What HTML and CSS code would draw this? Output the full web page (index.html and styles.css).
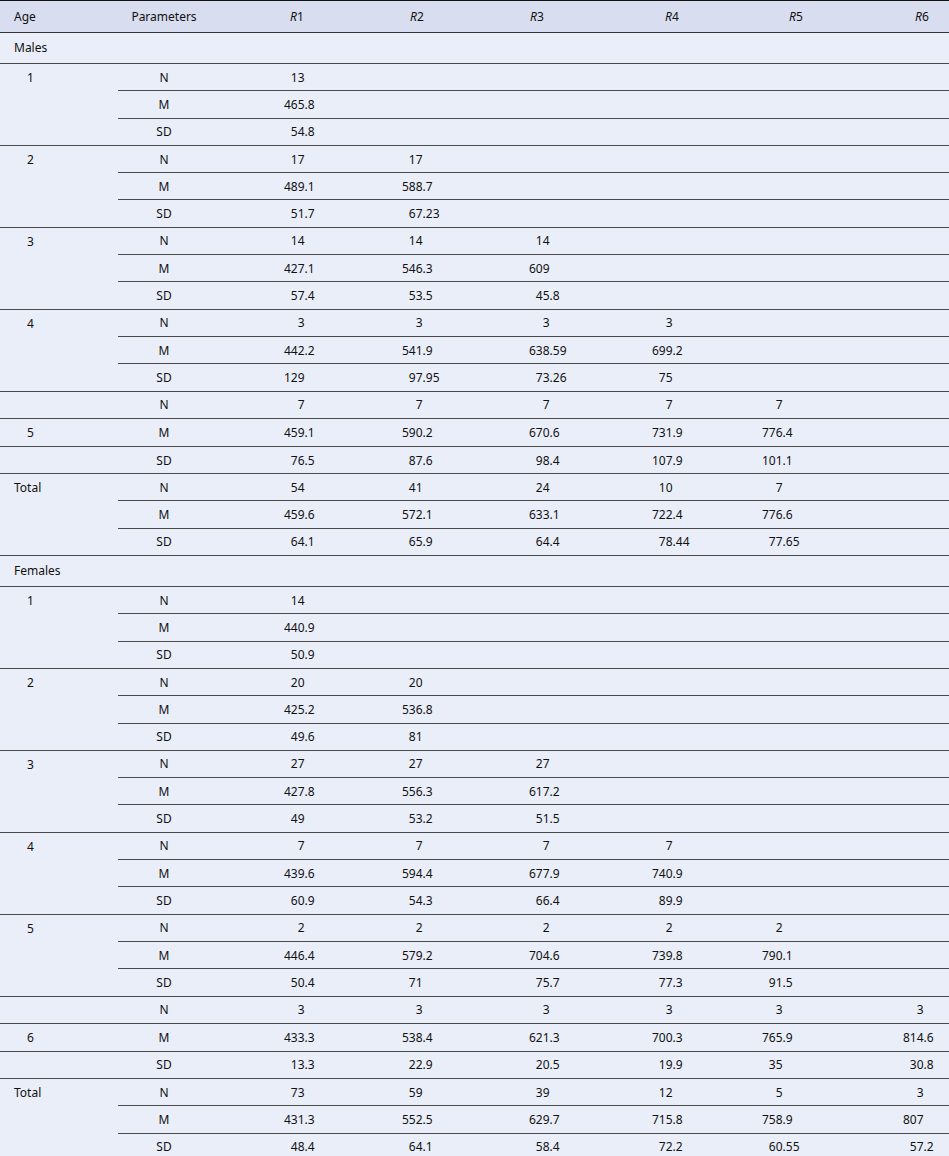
FILE: index.html
```html
<!DOCTYPE html>
<html lang="en">
<head>
<meta charset="utf-8">
<title>Table</title>
<link rel="stylesheet" href="styles.css">
</head>
<body>
<table class="data">
<colgroup>
<col class="w-age"><col class="w-par"><col class="w-r1"><col class="w-r2"><col class="w-r3"><col class="w-r4"><col class="w-r5"><col class="w-r6">
</colgroup>
<thead>
<tr>
<th class="age">Age</th><th class="par">Parameters</th>
<th class="h h1"><i>R</i>1</th><th class="h h2"><i>R</i>2</th><th class="h h3"><i>R</i>3</th><th class="h h4"><i>R</i>4</th><th class="h h5"><i>R</i>5</th><th class="h h6"><i>R</i>6</th>
</tr>
</thead>
<tbody>
<tr class="sec"><td class="age">Males</td><td></td><td></td><td></td><td></td><td></td><td></td><td></td></tr>

<tr><td class="age num" rowspan="3">1</td><td class="par">N</td><td class="v"><span class="i">13</span></td><td></td><td></td><td></td><td></td><td></td></tr>
<tr class="sub"><td class="par">M</td><td class="v"><span class="i">465</span>.8</td><td></td><td></td><td></td><td></td><td></td></tr>
<tr class="sub"><td class="par">SD</td><td class="v"><span class="i">54</span>.8</td><td></td><td></td><td></td><td></td><td></td></tr>

<tr><td class="age num" rowspan="3">2</td><td class="par">N</td><td class="v"><span class="i">17</span></td><td class="v"><span class="i">17</span></td><td></td><td></td><td></td><td></td></tr>
<tr class="sub"><td class="par">M</td><td class="v"><span class="i">489</span>.1</td><td class="v"><span class="i">588</span>.7</td><td></td><td></td><td></td><td></td></tr>
<tr class="sub"><td class="par">SD</td><td class="v"><span class="i">51</span>.7</td><td class="v"><span class="i">67</span>.23</td><td></td><td></td><td></td><td></td></tr>

<tr><td class="age num" rowspan="3">3</td><td class="par">N</td><td class="v"><span class="i">14</span></td><td class="v"><span class="i">14</span></td><td class="v"><span class="i">14</span></td><td></td><td></td><td></td></tr>
<tr class="sub"><td class="par">M</td><td class="v"><span class="i">427</span>.1</td><td class="v"><span class="i">546</span>.3</td><td class="v"><span class="i">609</span></td><td></td><td></td><td></td></tr>
<tr class="sub"><td class="par">SD</td><td class="v"><span class="i">57</span>.4</td><td class="v"><span class="i">53</span>.5</td><td class="v"><span class="i">45</span>.8</td><td></td><td></td><td></td></tr>

<tr><td class="age num" rowspan="3">4</td><td class="par">N</td><td class="v"><span class="i">3</span></td><td class="v"><span class="i">3</span></td><td class="v"><span class="i">3</span></td><td class="v"><span class="i">3</span></td><td></td><td></td></tr>
<tr class="sub"><td class="par">M</td><td class="v"><span class="i">442</span>.2</td><td class="v"><span class="i">541</span>.9</td><td class="v"><span class="i">638</span>.59</td><td class="v"><span class="i">699</span>.2</td><td></td><td></td></tr>
<tr class="sub"><td class="par">SD</td><td class="v"><span class="i">129</span></td><td class="v"><span class="i">97</span>.95</td><td class="v"><span class="i">73</span>.26</td><td class="v"><span class="i">75</span></td><td></td><td></td></tr>

<tr><td class="age num"></td><td class="par">N</td><td class="v"><span class="i">7</span></td><td class="v"><span class="i">7</span></td><td class="v"><span class="i">7</span></td><td class="v"><span class="i">7</span></td><td class="v"><span class="i">7</span></td><td></td></tr>
<tr><td class="age num">5</td><td class="par">M</td><td class="v"><span class="i">459</span>.1</td><td class="v"><span class="i">590</span>.2</td><td class="v"><span class="i">670</span>.6</td><td class="v"><span class="i">731</span>.9</td><td class="v"><span class="i">776</span>.4</td><td></td></tr>
<tr><td class="age num"></td><td class="par">SD</td><td class="v"><span class="i">76</span>.5</td><td class="v"><span class="i">87</span>.6</td><td class="v"><span class="i">98</span>.4</td><td class="v"><span class="i">107</span>.9</td><td class="v"><span class="i">101</span>.1</td><td></td></tr>

<tr><td class="age" rowspan="3">Total</td><td class="par">N</td><td class="v"><span class="i">54</span></td><td class="v"><span class="i">41</span></td><td class="v"><span class="i">24</span></td><td class="v"><span class="i">10</span></td><td class="v"><span class="i">7</span></td><td></td></tr>
<tr class="sub"><td class="par">M</td><td class="v"><span class="i">459</span>.6</td><td class="v"><span class="i">572</span>.1</td><td class="v"><span class="i">633</span>.1</td><td class="v"><span class="i">722</span>.4</td><td class="v"><span class="i">776</span>.6</td><td></td></tr>
<tr class="sub"><td class="par">SD</td><td class="v"><span class="i">64</span>.1</td><td class="v"><span class="i">65</span>.9</td><td class="v"><span class="i">64</span>.4</td><td class="v"><span class="i">78</span>.44</td><td class="v"><span class="i">77</span>.65</td><td></td></tr>

<tr class="sec"><td class="age">Females</td><td></td><td></td><td></td><td></td><td></td><td></td><td></td></tr>

<tr><td class="age num" rowspan="3">1</td><td class="par">N</td><td class="v"><span class="i">14</span></td><td></td><td></td><td></td><td></td><td></td></tr>
<tr class="sub"><td class="par">M</td><td class="v"><span class="i">440</span>.9</td><td></td><td></td><td></td><td></td><td></td></tr>
<tr class="sub"><td class="par">SD</td><td class="v"><span class="i">50</span>.9</td><td></td><td></td><td></td><td></td><td></td></tr>

<tr><td class="age num" rowspan="3">2</td><td class="par">N</td><td class="v"><span class="i">20</span></td><td class="v"><span class="i">20</span></td><td></td><td></td><td></td><td></td></tr>
<tr class="sub"><td class="par">M</td><td class="v"><span class="i">425</span>.2</td><td class="v"><span class="i">536</span>.8</td><td></td><td></td><td></td><td></td></tr>
<tr class="sub"><td class="par">SD</td><td class="v"><span class="i">49</span>.6</td><td class="v"><span class="i">81</span></td><td></td><td></td><td></td><td></td></tr>

<tr><td class="age num" rowspan="3">3</td><td class="par">N</td><td class="v"><span class="i">27</span></td><td class="v"><span class="i">27</span></td><td class="v"><span class="i">27</span></td><td></td><td></td><td></td></tr>
<tr class="sub"><td class="par">M</td><td class="v"><span class="i">427</span>.8</td><td class="v"><span class="i">556</span>.3</td><td class="v"><span class="i">617</span>.2</td><td></td><td></td><td></td></tr>
<tr class="sub"><td class="par">SD</td><td class="v"><span class="i">49</span></td><td class="v"><span class="i">53</span>.2</td><td class="v"><span class="i">51</span>.5</td><td></td><td></td><td></td></tr>

<tr><td class="age num" rowspan="3">4</td><td class="par">N</td><td class="v"><span class="i">7</span></td><td class="v"><span class="i">7</span></td><td class="v"><span class="i">7</span></td><td class="v"><span class="i">7</span></td><td></td><td></td></tr>
<tr class="sub"><td class="par">M</td><td class="v"><span class="i">439</span>.6</td><td class="v"><span class="i">594</span>.4</td><td class="v"><span class="i">677</span>.9</td><td class="v"><span class="i">740</span>.9</td><td></td><td></td></tr>
<tr class="sub"><td class="par">SD</td><td class="v"><span class="i">60</span>.9</td><td class="v"><span class="i">54</span>.3</td><td class="v"><span class="i">66</span>.4</td><td class="v"><span class="i">89</span>.9</td><td></td><td></td></tr>

<tr><td class="age num" rowspan="3">5</td><td class="par">N</td><td class="v"><span class="i">2</span></td><td class="v"><span class="i">2</span></td><td class="v"><span class="i">2</span></td><td class="v"><span class="i">2</span></td><td class="v"><span class="i">2</span></td><td></td></tr>
<tr class="sub"><td class="par">M</td><td class="v"><span class="i">446</span>.4</td><td class="v"><span class="i">579</span>.2</td><td class="v"><span class="i">704</span>.6</td><td class="v"><span class="i">739</span>.8</td><td class="v"><span class="i">790</span>.1</td><td></td></tr>
<tr class="sub"><td class="par">SD</td><td class="v"><span class="i">50</span>.4</td><td class="v"><span class="i">71</span></td><td class="v"><span class="i">75</span>.7</td><td class="v"><span class="i">77</span>.3</td><td class="v"><span class="i">91</span>.5</td><td></td></tr>

<tr><td class="age num"></td><td class="par">N</td><td class="v"><span class="i">3</span></td><td class="v"><span class="i">3</span></td><td class="v"><span class="i">3</span></td><td class="v"><span class="i">3</span></td><td class="v"><span class="i">3</span></td><td class="v"><span class="i">3</span></td></tr>
<tr><td class="age num">6</td><td class="par">M</td><td class="v"><span class="i">433</span>.3</td><td class="v"><span class="i">538</span>.4</td><td class="v"><span class="i">621</span>.3</td><td class="v"><span class="i">700</span>.3</td><td class="v"><span class="i">765</span>.9</td><td class="v"><span class="i">814</span>.6</td></tr>
<tr><td class="age num"></td><td class="par">SD</td><td class="v"><span class="i">13</span>.3</td><td class="v"><span class="i">22</span>.9</td><td class="v"><span class="i">20</span>.5</td><td class="v"><span class="i">19</span>.9</td><td class="v"><span class="i">35</span></td><td class="v"><span class="i">30</span>.8</td></tr>

<tr><td class="age" rowspan="3">Total</td><td class="par">N</td><td class="v"><span class="i">73</span></td><td class="v"><span class="i">59</span></td><td class="v"><span class="i">39</span></td><td class="v"><span class="i">12</span></td><td class="v"><span class="i">5</span></td><td class="v"><span class="i">3</span></td></tr>
<tr class="sub"><td class="par">M</td><td class="v"><span class="i">431</span>.3</td><td class="v"><span class="i">552</span>.5</td><td class="v"><span class="i">629</span>.7</td><td class="v"><span class="i">715</span>.8</td><td class="v"><span class="i">758</span>.9</td><td class="v"><span class="i">807</span></td></tr>
<tr class="sub last"><td class="par">SD</td><td class="v"><span class="i">48</span>.4</td><td class="v"><span class="i">64</span>.1</td><td class="v"><span class="i">58</span>.4</td><td class="v"><span class="i">72</span>.2</td><td class="v"><span class="i">60</span>.55</td><td class="v"><span class="i">57</span>.2</td></tr>
</tbody>
</table>
</body>
</html>
```

FILE: styles.css
```css
html, body {
  margin: 0;
  padding: 0;
  background: #eaeef8;
}

.data {
  border-collapse: collapse;
  table-layout: fixed;
  width: 949px;
  font-family: "Noto Sans", "Open Sans", sans-serif;
  font-size: 12px;
  color: #111;
  background: #eaeef8;
}

.w-age { width: 118px; }
.w-par { width: 158px; }
.w-r1 { width: 118px; }
.w-r2 { width: 127px; }
.w-r3 { width: 123px; }
.w-r4 { width: 110px; }
.w-r5 { width: 141px; }
.w-r6 { width: 54px; }

.data th {
  font-weight: normal;
  text-align: left;
  background: #d8deef;
  height: 31px;
  padding: 0;
  border-top: 1px solid #111;
  border-bottom: 1px solid #333;
  vertical-align: middle;
}

.data td {
  height: 26.3px;
  padding: 0;
  border-bottom: 1px solid #4a4a4a;
  vertical-align: middle;
  white-space: nowrap;
}

.data tr.sec td {
  height: 30px;
}

.data .age {
  padding-left: 14px;
}

.data td.age {
  vertical-align: top;
  line-height: 27px;
}

.data tr.sec td.age {
  line-height: 30px;
}

.data .age.num {
  padding-left: 27px;
}

.data .par {
  text-align: center;
  padding-right: 66px;
}

.data th.h1 { padding-left: 14px; }
.data th.h2 { padding-left: 16px; }
.data th.h3 { padding-left: 9px; }
.data th.h4 { padding-left: 21px; }
.data th.h5 { padding-left: 35px; }
.data th.h6 { padding-left: 20px; }

.data td.v {
  padding-left: 8px;
}

.data .i {
  display: inline-block;
  width: 3ch;
  text-align: right;
}

.data tr.last td {
  border-bottom: 1px solid #111;
}
```
